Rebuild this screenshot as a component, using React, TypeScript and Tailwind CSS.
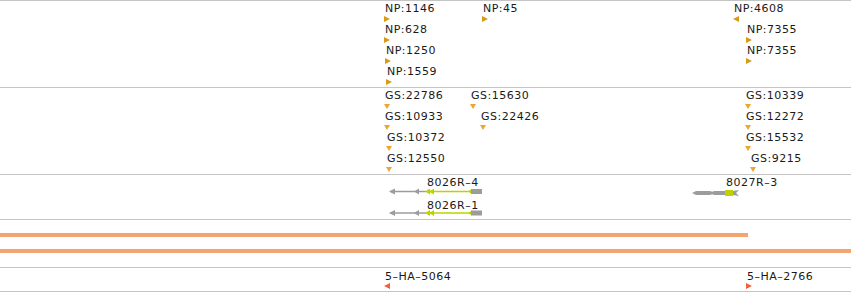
type Dir = 'right' | 'left' | 'down';

interface Feature {
  label: string;
  x: number;
  row: number;
  dir: Dir;
}

const npFeatures: Feature[] = [
  { label: 'NP:1146', x: 385, row: 0, dir: 'right' },
  { label: 'NP:628', x: 385, row: 1, dir: 'right' },
  { label: 'NP:1250', x: 386, row: 2, dir: 'right' },
  { label: 'NP:1559', x: 387, row: 3, dir: 'right' },
  { label: 'NP:45', x: 483, row: 0, dir: 'right' },
  { label: 'NP:4608', x: 734, row: 0, dir: 'left' },
  { label: 'NP:7355', x: 747, row: 1, dir: 'right' },
  { label: 'NP:7355', x: 747, row: 2, dir: 'right' },
];

const gsFeatures: Feature[] = [
  { label: 'GS:22786', x: 385, row: 0, dir: 'down' },
  { label: 'GS:10933', x: 385, row: 1, dir: 'down' },
  { label: 'GS:10372', x: 387, row: 2, dir: 'down' },
  { label: 'GS:12550', x: 387, row: 3, dir: 'down' },
  { label: 'GS:15630', x: 471, row: 0, dir: 'down' },
  { label: 'GS:22426', x: 481, row: 1, dir: 'down' },
  { label: 'GS:10339', x: 746, row: 0, dir: 'down' },
  { label: 'GS:12272', x: 746, row: 1, dir: 'down' },
  { label: 'GS:15532', x: 746, row: 2, dir: 'down' },
  { label: 'GS:9215', x: 751, row: 3, dir: 'down' },
];

const haFeatures: Feature[] = [
  { label: '5–HA–5064', x: 385, row: 0, dir: 'left' },
  { label: '5–HA–2766', x: 747, row: 0, dir: 'right' },
];

function Marker({ dir, color }: { dir: Dir; color: string }) {
  if (dir === 'down') {
    return (
      <svg width="6" height="5" className="block">
        <polygon points="0,0 6,0 3,5" fill={color} />
      </svg>
    );
  }
  return (
    <svg width="6" height="6" className="block">
      {dir === 'right' ? (
        <polygon points="0,0 6,3 0,6" fill={color} />
      ) : (
        <polygon points="6,0 0,3 6,6" fill={color} />
      )}
    </svg>
  );
}

function FeatureTrack({
  features,
  color,
  top,
  pitch,
  markerGap,
}: {
  features: Feature[];
  color: string;
  top: number;
  pitch: number;
  markerGap: number;
}) {
  return (
    <>
      {features.map((f, i) => (
        <div
          key={i}
          className="absolute"
          style={{ left: f.x, top: top + f.row * pitch }}
        >
          <div className="text-[11px] leading-[11px] tracking-[0.5px] text-[#1a1a1a] whitespace-nowrap">
            {f.label}
          </div>
          <div className="-ml-px" style={{ marginTop: markerGap }}>
            <Marker dir={f.dir} color={color} />
          </div>
        </div>
      ))}
    </>
  );
}

const GRAY = '#9c9c9c';
const GREEN = '#bfd200';

function Gene({ y }: { y: number }) {
  return (
    <g transform={`translate(0,${y})`}>
      <line x1="390" y1="0" x2="426" y2="0" stroke={GRAY} strokeWidth="1.5" />
      <polygon points="389,0 395,-3 395,3" fill={GRAY} />
      <polygon points="414,0 419,-3 419,3" fill={GRAY} />
      <polygon points="425,0 430,-3 430,3" fill={GREEN} />
      <polygon points="429,0 434,-3 434,3" fill={GREEN} />
      <line x1="430" y1="0" x2="471" y2="0" stroke={GREEN} strokeWidth="1.5" />
      <polygon points="468,0 472,-2.5 472,2.5" fill={GREEN} />
      <rect x="471" y="-2.5" width="11" height="5" fill={GRAY} />
    </g>
  );
}

function Genes() {
  return (
    <svg width="851" height="44" className="absolute left-0 top-0">
      <Gene y={16.5} />
      <Gene y={38} />
      {/* 8027R-3 */}
      <g transform="translate(0,18)">
        <polygon points="692,0 696,-2 710,-2 713,-1 713,1 710,2 696,2" fill={GRAY} />
        <polygon points="710,0 714,-2 725,-2 725,2 714,2" fill={GRAY} />
        <rect x="725" y="-3" width="8" height="6" fill={GREEN} />
        <polygon points="733,-2 739,-3 736,0 739,3 733,2" fill={GRAY} />
      </g>
    </svg>
  );
}

export default function App() {
  return (
    <div
      className="w-[851px] h-[292px] bg-white overflow-hidden flex flex-col"
      style={{ fontFamily: '"DejaVu Sans", Verdana, sans-serif' }}
    >
      <div className="relative h-[88px] border-t border-b border-[#c4c4c4]">
        <FeatureTrack features={npFeatures} color="#d99a14" top={2} pitch={21} markerGap={2} />
      </div>
      <div className="relative h-[87px] border-b border-[#c4c4c4]">
        <FeatureTrack features={gsFeatures} color="#f0a52c" top={2} pitch={21} markerGap={3} />
      </div>
      <div className="relative h-[45px] border-b border-[#c4c4c4]">
        <Genes />
        <div className="absolute left-[427px] top-[2px] text-[11px] leading-[11px] tracking-[0.5px] text-[#1a1a1a]">8026R–4</div>
        <div className="absolute left-[427px] top-[25px] text-[11px] leading-[11px] tracking-[0.5px] text-[#1a1a1a]">8026R–1</div>
        <div className="absolute left-[726px] top-[2px] text-[11px] leading-[11px] tracking-[0.5px] text-[#1a1a1a]">8027R–3</div>
      </div>
      <div className="h-[48px] border-b border-[#c4c4c4] flex flex-col pt-[13px] gap-[12px]">
        <div className="h-[4px] w-[748px] bg-[#f4a470]" />
        <div className="h-[4px] w-full bg-[#f4a470]" />
      </div>
      <div className="relative h-[24px] border-b border-[#c4c4c4]">
        <FeatureTrack features={haFeatures} color="#f2603a" top={3} pitch={21} markerGap={1} />
      </div>
    </div>
  );
}
